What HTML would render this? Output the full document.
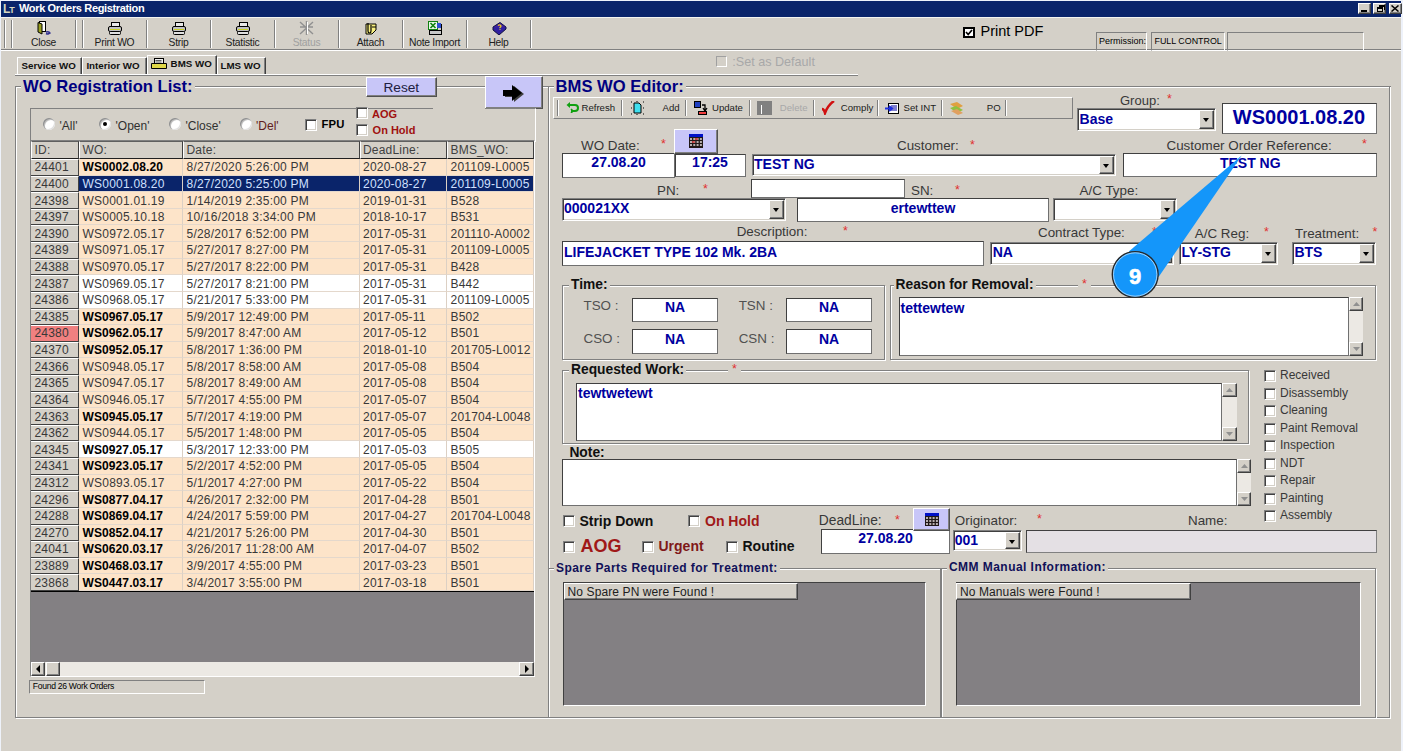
<!DOCTYPE html><html><head><meta charset="utf-8"><style>
*{box-sizing:border-box;margin:0;padding:0}
html,body{width:1403px;height:751px;overflow:hidden;background:#d4d0c8;font-family:"Liberation Sans",sans-serif;color:#000}
.a{position:absolute;white-space:nowrap}
.sunk{background:#fff;border:1px solid;border-color:#808080 #fff #fff #808080;box-shadow:inset 1px 1px 0 #404040,inset -1px -1px 0 #d4d0c8}
.flat{background:#fff;border:1px solid;border-color:#404040 #707070 #707070 #404040}
.raised{background:#d4d0c8;border:1px solid;border-color:#fff #404040 #404040 #fff;box-shadow:inset -1px -1px 0 #808080}
.grp{border:1px solid #808080;box-shadow:inset 1px 1px 0 #fff,1px 1px 0 #fff}
.vsep{width:2px;border-left:1px solid #808080;border-right:1px solid #fff}
.hsep{height:2px;border-top:1px solid #808080;border-bottom:1px solid #fff}
.dd{position:absolute;right:1px;top:1px;bottom:1px;width:15px;background:#d4d0c8;border:1px solid;border-color:#fff #404040 #404040 #fff;box-shadow:inset -1px -1px 0 #808080}
.dd:after{content:"";position:absolute;left:3px;top:50%;margin-top:-1px;border-left:3.5px solid transparent;border-right:3.5px solid transparent;border-top:4px solid #000}
.cb{position:absolute;width:12px;height:12px;background:#fff;border:1px solid;border-color:#808080 #fff #fff #808080;box-shadow:inset 1px 1px 0 #404040,inset -1px -1px 0 #d4d0c8}
.rb{position:absolute;width:12px;height:12px;border-radius:50%;background:#fff;box-shadow:inset 1px 1px 0 #909090,inset 2px 2px 0 #c0c0c0,inset -1px -1px 0 #e0e0e0}
.lav{background:#c8c6f8;border:1px solid;border-color:#fff #505050 #505050 #fff;box-shadow:inset -1px -1px 0 #808080}
</style></head><body>
<div class="a " style="left:0px;top:0px;width:1403px;height:1px;background:#eef2fa"></div>
<div class="a " style="left:0px;top:0px;width:1px;height:751px;background:#eef2fa"></div>
<div class="a " style="left:1401px;top:0px;width:2px;height:751px;background:#eef2fa"></div>
<div class="a " style="left:1px;top:1px;width:1400px;height:16px;background:#0a246a"></div>
<div class="a " style="left:19px;top:3.15px;font-size:11px;line-height:11px;font-weight:bold;color:#fff;letter-spacing:-0.35px">Work Orders Registration</div>
<div class="a " style="left:3px;top:2.80px;font-size:12px;line-height:12px;font-weight:bold;color:#d8d8c0;letter-spacing:-1px;font-family:"Liberation Serif"">L<span style="font-size:9px">T</span></div>
<div class="a raised" style="left:1358px;top:3px;width:13px;height:11px;"></div>
<div class="a raised" style="left:1373px;top:3px;width:13px;height:11px;"></div>
<div class="a raised" style="left:1389px;top:3px;width:13px;height:11px;"></div>
<div class="a " style="left:1361px;top:10px;width:6px;height:2px;background:#000"></div>
<div class="a " style="left:1377px;top:7px;width:6px;height:5px;border:1px solid #000;border-top-width:2px;background:#d4d0c8"></div>
<div class="a " style="left:1379px;top:5px;width:6px;height:5px;border:1px solid #000;border-top-width:2px;border-left:none;border-bottom:none"></div>
<svg class="a" style="left:1391px;top:5px" width="8" height="7" viewBox="0 0 8 7"><path d="M0.5 0.5 L7.5 6.5 M7.5 0.5 L0.5 6.5" stroke="#000" stroke-width="1.5"/></svg>
<div class="a " style="left:1px;top:17px;width:1400px;height:1px;background:#f4f4f0"></div>
<div class="a vsep" style="left:4px;top:20px;width:2px;height:28px;"></div>
<div class="a vsep" style="left:11px;top:20px;width:2px;height:28px;"></div>
<div class="a vsep" style="left:75px;top:20px;width:2px;height:28px;"></div>
<div class="a vsep" style="left:82px;top:20px;width:2px;height:28px;"></div>
<div class="a vsep" style="left:146px;top:20px;width:2px;height:28px;"></div>
<div class="a vsep" style="left:210px;top:20px;width:2px;height:28px;"></div>
<div class="a vsep" style="left:274px;top:20px;width:2px;height:28px;"></div>
<div class="a vsep" style="left:338px;top:20px;width:2px;height:28px;"></div>
<div class="a vsep" style="left:402px;top:20px;width:2px;height:28px;"></div>
<div class="a vsep" style="left:466px;top:20px;width:2px;height:28px;"></div>
<div class="a vsep" style="left:530px;top:20px;width:2px;height:28px;"></div>
<div class="a" style="left:-106.5px;width:300px;text-align:center;top:37.74px;font-size:10.3px;line-height:10.3px;color:#202020;letter-spacing:-0.25px">Close</div>
<div class="a" style="left:-35.5px;width:300px;text-align:center;top:37.74px;font-size:10.3px;line-height:10.3px;color:#202020;letter-spacing:-0.25px">Print WO</div>
<div class="a" style="left:28.5px;width:300px;text-align:center;top:37.74px;font-size:10.3px;line-height:10.3px;color:#202020;letter-spacing:-0.25px">Strip</div>
<div class="a" style="left:92.5px;width:300px;text-align:center;top:37.74px;font-size:10.3px;line-height:10.3px;color:#202020;letter-spacing:-0.25px">Statistic</div>
<div class="a" style="left:156.5px;width:300px;text-align:center;top:37.74px;font-size:10.3px;line-height:10.3px;color:#a0a0a0;letter-spacing:-0.25px">Status</div>
<div class="a" style="left:220.5px;width:300px;text-align:center;top:37.74px;font-size:10.3px;line-height:10.3px;color:#202020;letter-spacing:-0.25px">Attach</div>
<div class="a" style="left:284.5px;width:300px;text-align:center;top:37.74px;font-size:10.3px;line-height:10.3px;color:#202020;letter-spacing:-0.25px">Note Import</div>
<div class="a" style="left:348.5px;width:300px;text-align:center;top:37.74px;font-size:10.3px;line-height:10.3px;color:#202020;letter-spacing:-0.25px">Help</div>
<div class="a hsep" style="left:1px;top:49px;width:1400px;height:2px;"></div>
<svg class="a" style="left:37px;top:21px" width="14" height="14" viewBox="0 0 14 14"><rect x="2.5" y="0.5" width="6" height="10" fill="#fff" stroke="#000"/><path d="M1 1.5 L5 3 L5 13 L1 11 Z" fill="#9aa020" stroke="#000" stroke-width="1"/><path d="M9 11 q3 -1 4 1 l-2 1 M9 12.5 q2 1 3 0" stroke="#303090" stroke-width="1.5" fill="none"/></svg>
<svg class="a" style="left:108px;top:22px" width="14" height="13" viewBox="0 0 14 13"><rect x="3.5" y="0.5" width="8" height="4" fill="#e8e8e8" stroke="#000"/><rect x="0.5" y="4.5" width="13" height="5" rx="1.5" fill="#c0c0c0" stroke="#000"/><rect x="2" y="7" width="10" height="1" fill="#c8d020"/><rect x="1.5" y="9.5" width="11" height="3" rx="1" fill="#e0e0e0" stroke="#000"/></svg>
<svg class="a" style="left:172px;top:22px" width="14" height="13" viewBox="0 0 14 13"><rect x="3.5" y="0.5" width="8" height="4" fill="#e8e8e8" stroke="#000"/><rect x="0.5" y="4.5" width="13" height="5" rx="1.5" fill="#c0c0c0" stroke="#000"/><rect x="2" y="7" width="10" height="1" fill="#c8d020"/><rect x="1.5" y="9.5" width="11" height="3" rx="1" fill="#e0e0e0" stroke="#000"/></svg>
<svg class="a" style="left:236px;top:22px" width="14" height="13" viewBox="0 0 14 13"><rect x="3.5" y="0.5" width="8" height="4" fill="#e8e8e8" stroke="#000"/><rect x="0.5" y="4.5" width="13" height="5" rx="1.5" fill="#c0c0c0" stroke="#000"/><rect x="2" y="7" width="10" height="1" fill="#c8d020"/><rect x="1.5" y="9.5" width="11" height="3" rx="1" fill="#e0e0e0" stroke="#000"/></svg>
<svg class="a" style="left:299px;top:21px" width="15" height="14" viewBox="0 0 15 14"><path d="M7.5 0 V14 M1 1 L14 13 M14 1 L1 13 M1 6 H14" stroke="#909090" stroke-width="1.4"/><path d="M8.5 1 V13" stroke="#fff" stroke-width="1"/></svg>
<svg class="a" style="left:363px;top:21px" width="15" height="14" viewBox="0 0 15 14"><path d="M3 3 H13 V9 L9 13 H3 Z" fill="#f8f080" stroke="#000"/><path d="M5 2 V10 Q5 12 6.5 12 Q8 12 8 10 V4" fill="none" stroke="#000" stroke-width="1.2"/><path d="M9 6 H13" stroke="#000"/></svg>
<svg class="a" style="left:428px;top:21px" width="14" height="14" viewBox="0 0 14 14"><rect x="0.5" y="0.5" width="9" height="8" fill="#e8f8e8" stroke="#108010"/><path d="M2.5 2 L7.5 7 M7.5 2 L2.5 7" stroke="#108010" stroke-width="1.6"/><rect x="9" y="2" width="4" height="5" fill="#3050d0"/><rect x="1.5" y="9.5" width="12" height="4" fill="#c8c8c8" stroke="#000"/><path d="M13.5 3 V13.5" stroke="#000"/></svg>
<svg class="a" style="left:492px;top:22px" width="15" height="13" viewBox="0 0 15 13"><path d="M1 5 L8 0.5 L14 5 L7 11 Z" fill="#4020a0" stroke="#101040"/><path d="M1 5 L1 8 L7 13 L14 7 L14 5" fill="#3020a0" stroke="#101040"/><path d="M6 3.5 q2 -1.5 3 0.5 q0 1 -1.5 2 M8 7 v0.8" stroke="#f0d020" stroke-width="1.3" fill="none"/></svg>
<svg class="a" style="left:963px;top:26.5px" width="12" height="11" viewBox="0 0 12 11"><rect x="1" y="1" width="10" height="9" fill="#fff" stroke="#000" stroke-width="2"/><path d="M3 5 L5.2 7.5 L9 3" stroke="#000" stroke-width="1.7" fill="none"/></svg>
<div class="a " style="left:980.5px;top:24.28px;font-size:14.5px;line-height:14.5px;color:#000">Print PDF</div>
<div class="a " style="left:1096px;top:31.5px;width:51px;height:19px;border:1px solid;border-color:#808080 #fff #fff #808080"></div>
<div class="a " style="left:1151px;top:31.5px;width:74px;height:19px;border:1px solid;border-color:#808080 #fff #fff #808080"></div>
<div class="a " style="left:1227px;top:31.5px;width:137px;height:19px;border:1px solid;border-color:#808080 #fff #fff #808080"></div>
<div class="a " style="left:1099px;top:36.85px;font-size:9px;line-height:9px;color:#000">Permission:</div>
<div class="a " style="left:1154.5px;top:36.94px;font-size:8.9px;line-height:8.9px;color:#000">FULL CONTROL</div>
<div class="a " style="left:17px;top:57px;width:64.5px;height:18px;border:1px solid;border-color:#fff #404040 transparent #fff;box-shadow:inset -1px 0 0 #808080"></div>
<div class="a " style="left:81.5px;top:57px;width:65.0px;height:18px;border:1px solid;border-color:#fff #404040 transparent #fff;box-shadow:inset -1px 0 0 #808080"></div>
<div class="a " style="left:216.5px;top:57px;width:49.5px;height:18px;border:1px solid;border-color:#fff #404040 transparent #fff;box-shadow:inset -1px 0 0 #808080"></div>
<div class="a " style="left:146.5px;top:54.5px;width:70px;height:21px;background:#d4d0c8;border:1px solid;border-color:#fff #404040 transparent #fff;box-shadow:inset -1px 0 0 #808080"></div>
<div class="a " style="left:21.6px;top:60.71px;font-size:9.75px;line-height:9.75px;font-weight:bold;color:#101010">Service WO</div>
<div class="a " style="left:86.4px;top:60.71px;font-size:9.75px;line-height:9.75px;font-weight:bold;color:#101010">Interior WO</div>
<div class="a " style="left:170.6px;top:58.71px;font-size:9.75px;line-height:9.75px;font-weight:bold;color:#101010">BMS WO</div>
<div class="a " style="left:220.5px;top:60.71px;font-size:9.75px;line-height:9.75px;font-weight:bold;color:#101010">LMS WO</div>
<svg class="a" style="left:151px;top:58px" width="16" height="11" viewBox="0 0 16 11"><rect x="3.5" y="0.5" width="9" height="6" fill="#f0f0f0" stroke="#000"/><path d="M4.5 2.5h6M4.5 4h6" stroke="#606060"/><path d="M0.5 5.5 H15.5 V10.5 H0.5 Z" fill="#e0d848" stroke="#000"/></svg>
<div class="a " style="left:716px;top:55.5px;width:11px;height:11px;border:1px solid;border-color:#a0a0a0 #fff #fff #a0a0a0"></div>
<div class="a " style="left:732.3px;top:55.99px;font-size:12.6px;line-height:12.6px;color:#a8a8a8">:Set as Default</div>
<div class="a " style="left:15px;top:73.5px;width:843px;height:2px;border-top:1px solid #fff;border-bottom:1px solid #808080"></div>
<div class="a grp" style="left:15px;top:86px;width:534px;height:631.5px;"></div>
<div class="a " style="left:21px;top:78.69px;font-size:16.6px;line-height:16.6px;font-weight:bold;color:#000080"><span style="padding:0 2px;background:#d4d0c8">WO Registration List:</span></div>
<div class="a lav" style="left:366px;top:77px;width:71px;height:20px;"></div>
<div class="a" style="left:251.3px;width:300px;text-align:center;top:81.06px;font-size:13.7px;line-height:13.7px;color:#202040">Reset</div>
<div class="a lav" style="left:485px;top:76px;width:57.5px;height:32.5px;"></div>
<svg class="a" style="left:501px;top:84px" width="24" height="19" viewBox="0 0 24 19"><path d="M4 7h9V2l10 8-10 8v-5H4z" fill="#404040"/><path d="M2 6h9V1l10 8-10 8v-5H2z" fill="#000"/></svg>
<div class="a " style="left:29.5px;top:107.5px;width:506px;height:34px;border:1px solid;border-color:#808080 #fff #fff #808080"></div>
<div class="a " style="left:433px;top:107px;width:52px;height:2px;background:#d4d0c8"></div>
<div class="rb" style="left:43px;top:118px"></div>
<div class="a " style="left:59.5px;top:120.00px;font-size:12px;line-height:12px;color:#303030">'All'</div>
<div class="rb" style="left:99px;top:118px"></div>
<div class="a " style="left:103px;top:122px;width:4px;height:4px;background:#000;border-radius:50%"></div>
<div class="a " style="left:115.5px;top:120.00px;font-size:12px;line-height:12px;color:#303030">'Open'</div>
<div class="rb" style="left:169px;top:118px"></div>
<div class="a " style="left:185.5px;top:120.00px;font-size:12px;line-height:12px;color:#303030">'Close'</div>
<div class="rb" style="left:239.5px;top:118px"></div>
<div class="a " style="left:256.0px;top:120.00px;font-size:12px;line-height:12px;color:#602020">'Del'</div>
<div class="cb" style="left:305px;top:119px"></div>
<div class="a " style="left:321.4px;top:119.39px;font-size:11.3px;line-height:11.3px;font-weight:bold;letter-spacing:0.2px">FPU</div>
<div class="cb" style="left:356px;top:107px"></div>
<div class="cb" style="left:356px;top:124px"></div>
<div class="a " style="left:372px;top:108.65px;font-size:11px;line-height:11px;font-weight:bold;color:#a01010">AOG</div>
<div class="a " style="left:372.6px;top:124.65px;font-size:11px;line-height:11px;font-weight:bold;color:#a01010">On Hold</div>
<div class="a " style="left:29.5px;top:140px;width:505.5px;height:537px;border:1px solid;border-color:#808080 #fff #fff #808080;background:#838083"></div>
<div class="a " style="left:31px;top:141px;width:48px;height:18px;background:#d4d0c8;border:1px solid;border-color:#606060 #404040 #202020 #fff"></div>
<div class="a " style="left:34.5px;top:143.80px;font-size:12px;line-height:12px;color:#404040;letter-spacing:0.2px">ID:</div>
<div class="a " style="left:79px;top:141px;width:104px;height:18px;background:#d4d0c8;border:1px solid;border-color:#606060 #404040 #202020 #fff"></div>
<div class="a " style="left:82.5px;top:143.80px;font-size:12px;line-height:12px;color:#404040;letter-spacing:0.2px">WO:</div>
<div class="a " style="left:183px;top:141px;width:176.5px;height:18px;background:#d4d0c8;border:1px solid;border-color:#606060 #404040 #202020 #fff"></div>
<div class="a " style="left:186.5px;top:143.80px;font-size:12px;line-height:12px;color:#404040;letter-spacing:0.2px">Date:</div>
<div class="a " style="left:359.5px;top:141px;width:87.5px;height:18px;background:#d4d0c8;border:1px solid;border-color:#606060 #404040 #202020 #fff"></div>
<div class="a " style="left:363.0px;top:143.80px;font-size:12px;line-height:12px;color:#404040;letter-spacing:0.2px">DeadLine:</div>
<div class="a " style="left:447px;top:141px;width:86.5px;height:18px;background:#d4d0c8;border:1px solid;border-color:#606060 #404040 #202020 #fff"></div>
<div class="a " style="left:450.5px;top:143.80px;font-size:12px;line-height:12px;color:#404040;letter-spacing:0.2px">BMS_WO:</div>
<div class="a " style="left:31px;top:159.0px;width:48px;height:16.615384615384617px;background:#d4d0c8;border-top:1px solid #fff;border-bottom:1px solid #404040;border-right:1px solid #404040"></div>
<div class="a " style="left:34.5px;top:161.30px;font-size:12px;line-height:12px;color:#383838;letter-spacing:0.2px">24401</div>
<div class="a " style="left:79px;top:159.0px;width:104px;height:16.615384615384617px;background:#fde4c9;border-right:1px solid #dcd0c4;border-bottom:1px solid #e4d8cc;overflow:hidden"></div>
<div class="a " style="left:82.5px;top:161.30px;font-size:12px;line-height:12px;color:#000;font-weight:bold;letter-spacing:0.1px">WS0002.08.20</div>
<div class="a " style="left:183px;top:159.0px;width:176.5px;height:16.615384615384617px;background:#fde4c9;border-right:1px solid #dcd0c4;border-bottom:1px solid #e4d8cc;overflow:hidden"></div>
<div class="a " style="left:186.5px;top:161.30px;font-size:12px;line-height:12px;color:#383838;letter-spacing:0.22px">8/27/2020 5:26:00 PM</div>
<div class="a " style="left:359.5px;top:159.0px;width:87.5px;height:16.615384615384617px;background:#fde4c9;border-right:1px solid #dcd0c4;border-bottom:1px solid #e4d8cc;overflow:hidden"></div>
<div class="a " style="left:363.0px;top:161.30px;font-size:12px;line-height:12px;color:#383838;letter-spacing:0.22px">2020-08-27</div>
<div class="a " style="left:447px;top:159.0px;width:86.5px;height:16.615384615384617px;background:#fde4c9;border-right:1px solid #dcd0c4;border-bottom:1px solid #e4d8cc;overflow:hidden"></div>
<div class="a " style="left:450.5px;top:161.30px;font-size:12px;line-height:12px;color:#383838;letter-spacing:0.22px">201109-L0005</div>
<div class="a " style="left:31px;top:175.6153846153846px;width:48px;height:16.615384615384617px;background:#d4d0c8;border-top:1px solid #fff;border-bottom:1px solid #404040;border-right:1px solid #404040"></div>
<div class="a " style="left:34.5px;top:177.92px;font-size:12px;line-height:12px;color:#383838;letter-spacing:0.2px">24400</div>
<div class="a " style="left:79px;top:175.6153846153846px;width:104px;height:16.615384615384617px;background:#0a246a;border-right:1px solid #dcd0c4;border-bottom:1px solid #e4d8cc;overflow:hidden"></div>
<div class="a " style="left:82.5px;top:177.92px;font-size:12px;line-height:12px;color:#d0e0ff;letter-spacing:0.22px">WS0001.08.20</div>
<div class="a " style="left:183px;top:175.6153846153846px;width:176.5px;height:16.615384615384617px;background:#0a246a;border-right:1px solid #dcd0c4;border-bottom:1px solid #e4d8cc;overflow:hidden"></div>
<div class="a " style="left:186.5px;top:177.92px;font-size:12px;line-height:12px;color:#d0e0ff;letter-spacing:0.22px">8/27/2020 5:25:00 PM</div>
<div class="a " style="left:359.5px;top:175.6153846153846px;width:87.5px;height:16.615384615384617px;background:#0a246a;border-right:1px solid #dcd0c4;border-bottom:1px solid #e4d8cc;overflow:hidden"></div>
<div class="a " style="left:363.0px;top:177.92px;font-size:12px;line-height:12px;color:#d0e0ff;letter-spacing:0.22px">2020-08-27</div>
<div class="a " style="left:447px;top:175.6153846153846px;width:86.5px;height:16.615384615384617px;background:#0a246a;border-right:1px solid #dcd0c4;border-bottom:1px solid #e4d8cc;overflow:hidden"></div>
<div class="a " style="left:450.5px;top:177.92px;font-size:12px;line-height:12px;color:#d0e0ff;letter-spacing:0.22px">201109-L0005</div>
<div class="a " style="left:31px;top:192.23076923076923px;width:48px;height:16.615384615384617px;background:#d4d0c8;border-top:1px solid #fff;border-bottom:1px solid #404040;border-right:1px solid #404040"></div>
<div class="a " style="left:34.5px;top:194.53px;font-size:12px;line-height:12px;color:#383838;letter-spacing:0.2px">24398</div>
<div class="a " style="left:79px;top:192.23076923076923px;width:104px;height:16.615384615384617px;background:#fde4c9;border-right:1px solid #dcd0c4;border-bottom:1px solid #e4d8cc;overflow:hidden"></div>
<div class="a " style="left:82.5px;top:194.53px;font-size:12px;line-height:12px;color:#383838;letter-spacing:0.22px">WS0001.01.19</div>
<div class="a " style="left:183px;top:192.23076923076923px;width:176.5px;height:16.615384615384617px;background:#fde4c9;border-right:1px solid #dcd0c4;border-bottom:1px solid #e4d8cc;overflow:hidden"></div>
<div class="a " style="left:186.5px;top:194.53px;font-size:12px;line-height:12px;color:#383838;letter-spacing:0.22px">1/14/2019 2:35:00 PM</div>
<div class="a " style="left:359.5px;top:192.23076923076923px;width:87.5px;height:16.615384615384617px;background:#fde4c9;border-right:1px solid #dcd0c4;border-bottom:1px solid #e4d8cc;overflow:hidden"></div>
<div class="a " style="left:363.0px;top:194.53px;font-size:12px;line-height:12px;color:#383838;letter-spacing:0.22px">2019-01-31</div>
<div class="a " style="left:447px;top:192.23076923076923px;width:86.5px;height:16.615384615384617px;background:#fde4c9;border-right:1px solid #dcd0c4;border-bottom:1px solid #e4d8cc;overflow:hidden"></div>
<div class="a " style="left:450.5px;top:194.53px;font-size:12px;line-height:12px;color:#383838;letter-spacing:0.22px">B528</div>
<div class="a " style="left:31px;top:208.84615384615387px;width:48px;height:16.615384615384617px;background:#d4d0c8;border-top:1px solid #fff;border-bottom:1px solid #404040;border-right:1px solid #404040"></div>
<div class="a " style="left:34.5px;top:211.15px;font-size:12px;line-height:12px;color:#383838;letter-spacing:0.2px">24397</div>
<div class="a " style="left:79px;top:208.84615384615387px;width:104px;height:16.615384615384617px;background:#fde4c9;border-right:1px solid #dcd0c4;border-bottom:1px solid #e4d8cc;overflow:hidden"></div>
<div class="a " style="left:82.5px;top:211.15px;font-size:12px;line-height:12px;color:#383838;letter-spacing:0.22px">WS0005.10.18</div>
<div class="a " style="left:183px;top:208.84615384615387px;width:176.5px;height:16.615384615384617px;background:#fde4c9;border-right:1px solid #dcd0c4;border-bottom:1px solid #e4d8cc;overflow:hidden"></div>
<div class="a " style="left:186.5px;top:211.15px;font-size:12px;line-height:12px;color:#383838;letter-spacing:0.22px">10/16/2018 3:34:00 PM</div>
<div class="a " style="left:359.5px;top:208.84615384615387px;width:87.5px;height:16.615384615384617px;background:#fde4c9;border-right:1px solid #dcd0c4;border-bottom:1px solid #e4d8cc;overflow:hidden"></div>
<div class="a " style="left:363.0px;top:211.15px;font-size:12px;line-height:12px;color:#383838;letter-spacing:0.22px">2018-10-17</div>
<div class="a " style="left:447px;top:208.84615384615387px;width:86.5px;height:16.615384615384617px;background:#fde4c9;border-right:1px solid #dcd0c4;border-bottom:1px solid #e4d8cc;overflow:hidden"></div>
<div class="a " style="left:450.5px;top:211.15px;font-size:12px;line-height:12px;color:#383838;letter-spacing:0.22px">B531</div>
<div class="a " style="left:31px;top:225.46153846153845px;width:48px;height:16.615384615384617px;background:#d4d0c8;border-top:1px solid #fff;border-bottom:1px solid #404040;border-right:1px solid #404040"></div>
<div class="a " style="left:34.5px;top:227.76px;font-size:12px;line-height:12px;color:#383838;letter-spacing:0.2px">24390</div>
<div class="a " style="left:79px;top:225.46153846153845px;width:104px;height:16.615384615384617px;background:#fde4c9;border-right:1px solid #dcd0c4;border-bottom:1px solid #e4d8cc;overflow:hidden"></div>
<div class="a " style="left:82.5px;top:227.76px;font-size:12px;line-height:12px;color:#383838;letter-spacing:0.22px">WS0972.05.17</div>
<div class="a " style="left:183px;top:225.46153846153845px;width:176.5px;height:16.615384615384617px;background:#fde4c9;border-right:1px solid #dcd0c4;border-bottom:1px solid #e4d8cc;overflow:hidden"></div>
<div class="a " style="left:186.5px;top:227.76px;font-size:12px;line-height:12px;color:#383838;letter-spacing:0.22px">5/28/2017 6:52:00 PM</div>
<div class="a " style="left:359.5px;top:225.46153846153845px;width:87.5px;height:16.615384615384617px;background:#fde4c9;border-right:1px solid #dcd0c4;border-bottom:1px solid #e4d8cc;overflow:hidden"></div>
<div class="a " style="left:363.0px;top:227.76px;font-size:12px;line-height:12px;color:#383838;letter-spacing:0.22px">2017-05-31</div>
<div class="a " style="left:447px;top:225.46153846153845px;width:86.5px;height:16.615384615384617px;background:#fde4c9;border-right:1px solid #dcd0c4;border-bottom:1px solid #e4d8cc;overflow:hidden"></div>
<div class="a " style="left:450.5px;top:227.76px;font-size:12px;line-height:12px;color:#383838;letter-spacing:0.22px">201110-A0002</div>
<div class="a " style="left:31px;top:242.0769230769231px;width:48px;height:16.615384615384617px;background:#d4d0c8;border-top:1px solid #fff;border-bottom:1px solid #404040;border-right:1px solid #404040"></div>
<div class="a " style="left:34.5px;top:244.38px;font-size:12px;line-height:12px;color:#383838;letter-spacing:0.2px">24389</div>
<div class="a " style="left:79px;top:242.0769230769231px;width:104px;height:16.615384615384617px;background:#fde4c9;border-right:1px solid #dcd0c4;border-bottom:1px solid #e4d8cc;overflow:hidden"></div>
<div class="a " style="left:82.5px;top:244.38px;font-size:12px;line-height:12px;color:#383838;letter-spacing:0.22px">WS0971.05.17</div>
<div class="a " style="left:183px;top:242.0769230769231px;width:176.5px;height:16.615384615384617px;background:#fde4c9;border-right:1px solid #dcd0c4;border-bottom:1px solid #e4d8cc;overflow:hidden"></div>
<div class="a " style="left:186.5px;top:244.38px;font-size:12px;line-height:12px;color:#383838;letter-spacing:0.22px">5/27/2017 8:27:00 PM</div>
<div class="a " style="left:359.5px;top:242.0769230769231px;width:87.5px;height:16.615384615384617px;background:#fde4c9;border-right:1px solid #dcd0c4;border-bottom:1px solid #e4d8cc;overflow:hidden"></div>
<div class="a " style="left:363.0px;top:244.38px;font-size:12px;line-height:12px;color:#383838;letter-spacing:0.22px">2017-05-31</div>
<div class="a " style="left:447px;top:242.0769230769231px;width:86.5px;height:16.615384615384617px;background:#fde4c9;border-right:1px solid #dcd0c4;border-bottom:1px solid #e4d8cc;overflow:hidden"></div>
<div class="a " style="left:450.5px;top:244.38px;font-size:12px;line-height:12px;color:#383838;letter-spacing:0.22px">201109-L0005</div>
<div class="a " style="left:31px;top:258.69230769230774px;width:48px;height:16.615384615384617px;background:#d4d0c8;border-top:1px solid #fff;border-bottom:1px solid #404040;border-right:1px solid #404040"></div>
<div class="a " style="left:34.5px;top:260.99px;font-size:12px;line-height:12px;color:#383838;letter-spacing:0.2px">24388</div>
<div class="a " style="left:79px;top:258.69230769230774px;width:104px;height:16.615384615384617px;background:#fde4c9;border-right:1px solid #dcd0c4;border-bottom:1px solid #e4d8cc;overflow:hidden"></div>
<div class="a " style="left:82.5px;top:260.99px;font-size:12px;line-height:12px;color:#383838;letter-spacing:0.22px">WS0970.05.17</div>
<div class="a " style="left:183px;top:258.69230769230774px;width:176.5px;height:16.615384615384617px;background:#fde4c9;border-right:1px solid #dcd0c4;border-bottom:1px solid #e4d8cc;overflow:hidden"></div>
<div class="a " style="left:186.5px;top:260.99px;font-size:12px;line-height:12px;color:#383838;letter-spacing:0.22px">5/27/2017 8:22:00 PM</div>
<div class="a " style="left:359.5px;top:258.69230769230774px;width:87.5px;height:16.615384615384617px;background:#fde4c9;border-right:1px solid #dcd0c4;border-bottom:1px solid #e4d8cc;overflow:hidden"></div>
<div class="a " style="left:363.0px;top:260.99px;font-size:12px;line-height:12px;color:#383838;letter-spacing:0.22px">2017-05-31</div>
<div class="a " style="left:447px;top:258.69230769230774px;width:86.5px;height:16.615384615384617px;background:#fde4c9;border-right:1px solid #dcd0c4;border-bottom:1px solid #e4d8cc;overflow:hidden"></div>
<div class="a " style="left:450.5px;top:260.99px;font-size:12px;line-height:12px;color:#383838;letter-spacing:0.22px">B428</div>
<div class="a " style="left:31px;top:275.3076923076923px;width:48px;height:16.615384615384617px;background:#d4d0c8;border-top:1px solid #fff;border-bottom:1px solid #404040;border-right:1px solid #404040"></div>
<div class="a " style="left:34.5px;top:277.61px;font-size:12px;line-height:12px;color:#383838;letter-spacing:0.2px">24387</div>
<div class="a " style="left:79px;top:275.3076923076923px;width:104px;height:16.615384615384617px;background:#ffffff;border-right:1px solid #dcd0c4;border-bottom:1px solid #e4d8cc;overflow:hidden"></div>
<div class="a " style="left:82.5px;top:277.61px;font-size:12px;line-height:12px;color:#383838;letter-spacing:0.22px">WS0969.05.17</div>
<div class="a " style="left:183px;top:275.3076923076923px;width:176.5px;height:16.615384615384617px;background:#ffffff;border-right:1px solid #dcd0c4;border-bottom:1px solid #e4d8cc;overflow:hidden"></div>
<div class="a " style="left:186.5px;top:277.61px;font-size:12px;line-height:12px;color:#383838;letter-spacing:0.22px">5/27/2017 8:21:00 PM</div>
<div class="a " style="left:359.5px;top:275.3076923076923px;width:87.5px;height:16.615384615384617px;background:#ffffff;border-right:1px solid #dcd0c4;border-bottom:1px solid #e4d8cc;overflow:hidden"></div>
<div class="a " style="left:363.0px;top:277.61px;font-size:12px;line-height:12px;color:#383838;letter-spacing:0.22px">2017-05-31</div>
<div class="a " style="left:447px;top:275.3076923076923px;width:86.5px;height:16.615384615384617px;background:#ffffff;border-right:1px solid #dcd0c4;border-bottom:1px solid #e4d8cc;overflow:hidden"></div>
<div class="a " style="left:450.5px;top:277.61px;font-size:12px;line-height:12px;color:#383838;letter-spacing:0.22px">B442</div>
<div class="a " style="left:31px;top:291.9230769230769px;width:48px;height:16.615384615384617px;background:#d4d0c8;border-top:1px solid #fff;border-bottom:1px solid #404040;border-right:1px solid #404040"></div>
<div class="a " style="left:34.5px;top:294.22px;font-size:12px;line-height:12px;color:#383838;letter-spacing:0.2px">24386</div>
<div class="a " style="left:79px;top:291.9230769230769px;width:104px;height:16.615384615384617px;background:#ffffff;border-right:1px solid #dcd0c4;border-bottom:1px solid #e4d8cc;overflow:hidden"></div>
<div class="a " style="left:82.5px;top:294.22px;font-size:12px;line-height:12px;color:#383838;letter-spacing:0.22px">WS0968.05.17</div>
<div class="a " style="left:183px;top:291.9230769230769px;width:176.5px;height:16.615384615384617px;background:#ffffff;border-right:1px solid #dcd0c4;border-bottom:1px solid #e4d8cc;overflow:hidden"></div>
<div class="a " style="left:186.5px;top:294.22px;font-size:12px;line-height:12px;color:#383838;letter-spacing:0.22px">5/21/2017 5:33:00 PM</div>
<div class="a " style="left:359.5px;top:291.9230769230769px;width:87.5px;height:16.615384615384617px;background:#ffffff;border-right:1px solid #dcd0c4;border-bottom:1px solid #e4d8cc;overflow:hidden"></div>
<div class="a " style="left:363.0px;top:294.22px;font-size:12px;line-height:12px;color:#383838;letter-spacing:0.22px">2017-05-31</div>
<div class="a " style="left:447px;top:291.9230769230769px;width:86.5px;height:16.615384615384617px;background:#ffffff;border-right:1px solid #dcd0c4;border-bottom:1px solid #e4d8cc;overflow:hidden"></div>
<div class="a " style="left:450.5px;top:294.22px;font-size:12px;line-height:12px;color:#383838;letter-spacing:0.22px">201109-L0005</div>
<div class="a " style="left:31px;top:308.53846153846155px;width:48px;height:16.615384615384617px;background:#d4d0c8;border-top:1px solid #fff;border-bottom:1px solid #404040;border-right:1px solid #404040"></div>
<div class="a " style="left:34.5px;top:310.84px;font-size:12px;line-height:12px;color:#383838;letter-spacing:0.2px">24385</div>
<div class="a " style="left:79px;top:308.53846153846155px;width:104px;height:16.615384615384617px;background:#fde4c9;border-right:1px solid #dcd0c4;border-bottom:1px solid #e4d8cc;overflow:hidden"></div>
<div class="a " style="left:82.5px;top:310.84px;font-size:12px;line-height:12px;color:#000;font-weight:bold;letter-spacing:0.1px">WS0967.05.17</div>
<div class="a " style="left:183px;top:308.53846153846155px;width:176.5px;height:16.615384615384617px;background:#fde4c9;border-right:1px solid #dcd0c4;border-bottom:1px solid #e4d8cc;overflow:hidden"></div>
<div class="a " style="left:186.5px;top:310.84px;font-size:12px;line-height:12px;color:#383838;letter-spacing:0.22px">5/9/2017 12:49:00 PM</div>
<div class="a " style="left:359.5px;top:308.53846153846155px;width:87.5px;height:16.615384615384617px;background:#fde4c9;border-right:1px solid #dcd0c4;border-bottom:1px solid #e4d8cc;overflow:hidden"></div>
<div class="a " style="left:363.0px;top:310.84px;font-size:12px;line-height:12px;color:#383838;letter-spacing:0.22px">2017-05-11</div>
<div class="a " style="left:447px;top:308.53846153846155px;width:86.5px;height:16.615384615384617px;background:#fde4c9;border-right:1px solid #dcd0c4;border-bottom:1px solid #e4d8cc;overflow:hidden"></div>
<div class="a " style="left:450.5px;top:310.84px;font-size:12px;line-height:12px;color:#383838;letter-spacing:0.22px">B502</div>
<div class="a " style="left:31px;top:325.1538461538462px;width:48px;height:16.615384615384617px;background:#f08080;border-top:1px solid #fff;border-bottom:1px solid #404040;border-right:1px solid #404040"></div>
<div class="a " style="left:34.5px;top:327.45px;font-size:12px;line-height:12px;color:#383838;letter-spacing:0.2px">24380</div>
<div class="a " style="left:79px;top:325.1538461538462px;width:104px;height:16.615384615384617px;background:#fde4c9;border-right:1px solid #dcd0c4;border-bottom:1px solid #e4d8cc;overflow:hidden"></div>
<div class="a " style="left:82.5px;top:327.45px;font-size:12px;line-height:12px;color:#000;font-weight:bold;letter-spacing:0.1px">WS0962.05.17</div>
<div class="a " style="left:183px;top:325.1538461538462px;width:176.5px;height:16.615384615384617px;background:#fde4c9;border-right:1px solid #dcd0c4;border-bottom:1px solid #e4d8cc;overflow:hidden"></div>
<div class="a " style="left:186.5px;top:327.45px;font-size:12px;line-height:12px;color:#383838;letter-spacing:0.22px">5/9/2017 8:47:00 AM</div>
<div class="a " style="left:359.5px;top:325.1538461538462px;width:87.5px;height:16.615384615384617px;background:#fde4c9;border-right:1px solid #dcd0c4;border-bottom:1px solid #e4d8cc;overflow:hidden"></div>
<div class="a " style="left:363.0px;top:327.45px;font-size:12px;line-height:12px;color:#383838;letter-spacing:0.22px">2017-05-12</div>
<div class="a " style="left:447px;top:325.1538461538462px;width:86.5px;height:16.615384615384617px;background:#fde4c9;border-right:1px solid #dcd0c4;border-bottom:1px solid #e4d8cc;overflow:hidden"></div>
<div class="a " style="left:450.5px;top:327.45px;font-size:12px;line-height:12px;color:#383838;letter-spacing:0.22px">B501</div>
<div class="a " style="left:31px;top:341.7692307692308px;width:48px;height:16.615384615384617px;background:#d4d0c8;border-top:1px solid #fff;border-bottom:1px solid #404040;border-right:1px solid #404040"></div>
<div class="a " style="left:34.5px;top:344.07px;font-size:12px;line-height:12px;color:#383838;letter-spacing:0.2px">24370</div>
<div class="a " style="left:79px;top:341.7692307692308px;width:104px;height:16.615384615384617px;background:#fde4c9;border-right:1px solid #dcd0c4;border-bottom:1px solid #e4d8cc;overflow:hidden"></div>
<div class="a " style="left:82.5px;top:344.07px;font-size:12px;line-height:12px;color:#000;font-weight:bold;letter-spacing:0.1px">WS0952.05.17</div>
<div class="a " style="left:183px;top:341.7692307692308px;width:176.5px;height:16.615384615384617px;background:#fde4c9;border-right:1px solid #dcd0c4;border-bottom:1px solid #e4d8cc;overflow:hidden"></div>
<div class="a " style="left:186.5px;top:344.07px;font-size:12px;line-height:12px;color:#383838;letter-spacing:0.22px">5/8/2017 1:36:00 PM</div>
<div class="a " style="left:359.5px;top:341.7692307692308px;width:87.5px;height:16.615384615384617px;background:#fde4c9;border-right:1px solid #dcd0c4;border-bottom:1px solid #e4d8cc;overflow:hidden"></div>
<div class="a " style="left:363.0px;top:344.07px;font-size:12px;line-height:12px;color:#383838;letter-spacing:0.22px">2018-01-10</div>
<div class="a " style="left:447px;top:341.7692307692308px;width:86.5px;height:16.615384615384617px;background:#fde4c9;border-right:1px solid #dcd0c4;border-bottom:1px solid #e4d8cc;overflow:hidden"></div>
<div class="a " style="left:450.5px;top:344.07px;font-size:12px;line-height:12px;color:#383838;letter-spacing:0.22px">201705-L0012</div>
<div class="a " style="left:31px;top:358.3846153846154px;width:48px;height:16.615384615384617px;background:#d4d0c8;border-top:1px solid #fff;border-bottom:1px solid #404040;border-right:1px solid #404040"></div>
<div class="a " style="left:34.5px;top:360.68px;font-size:12px;line-height:12px;color:#383838;letter-spacing:0.2px">24366</div>
<div class="a " style="left:79px;top:358.3846153846154px;width:104px;height:16.615384615384617px;background:#fde4c9;border-right:1px solid #dcd0c4;border-bottom:1px solid #e4d8cc;overflow:hidden"></div>
<div class="a " style="left:82.5px;top:360.68px;font-size:12px;line-height:12px;color:#383838;letter-spacing:0.22px">WS0948.05.17</div>
<div class="a " style="left:183px;top:358.3846153846154px;width:176.5px;height:16.615384615384617px;background:#fde4c9;border-right:1px solid #dcd0c4;border-bottom:1px solid #e4d8cc;overflow:hidden"></div>
<div class="a " style="left:186.5px;top:360.68px;font-size:12px;line-height:12px;color:#383838;letter-spacing:0.22px">5/8/2017 8:58:00 AM</div>
<div class="a " style="left:359.5px;top:358.3846153846154px;width:87.5px;height:16.615384615384617px;background:#fde4c9;border-right:1px solid #dcd0c4;border-bottom:1px solid #e4d8cc;overflow:hidden"></div>
<div class="a " style="left:363.0px;top:360.68px;font-size:12px;line-height:12px;color:#383838;letter-spacing:0.22px">2017-05-08</div>
<div class="a " style="left:447px;top:358.3846153846154px;width:86.5px;height:16.615384615384617px;background:#fde4c9;border-right:1px solid #dcd0c4;border-bottom:1px solid #e4d8cc;overflow:hidden"></div>
<div class="a " style="left:450.5px;top:360.68px;font-size:12px;line-height:12px;color:#383838;letter-spacing:0.22px">B504</div>
<div class="a " style="left:31px;top:375.0px;width:48px;height:16.615384615384617px;background:#d4d0c8;border-top:1px solid #fff;border-bottom:1px solid #404040;border-right:1px solid #404040"></div>
<div class="a " style="left:34.5px;top:377.30px;font-size:12px;line-height:12px;color:#383838;letter-spacing:0.2px">24365</div>
<div class="a " style="left:79px;top:375.0px;width:104px;height:16.615384615384617px;background:#fde4c9;border-right:1px solid #dcd0c4;border-bottom:1px solid #e4d8cc;overflow:hidden"></div>
<div class="a " style="left:82.5px;top:377.30px;font-size:12px;line-height:12px;color:#383838;letter-spacing:0.22px">WS0947.05.17</div>
<div class="a " style="left:183px;top:375.0px;width:176.5px;height:16.615384615384617px;background:#fde4c9;border-right:1px solid #dcd0c4;border-bottom:1px solid #e4d8cc;overflow:hidden"></div>
<div class="a " style="left:186.5px;top:377.30px;font-size:12px;line-height:12px;color:#383838;letter-spacing:0.22px">5/8/2017 8:49:00 AM</div>
<div class="a " style="left:359.5px;top:375.0px;width:87.5px;height:16.615384615384617px;background:#fde4c9;border-right:1px solid #dcd0c4;border-bottom:1px solid #e4d8cc;overflow:hidden"></div>
<div class="a " style="left:363.0px;top:377.30px;font-size:12px;line-height:12px;color:#383838;letter-spacing:0.22px">2017-05-08</div>
<div class="a " style="left:447px;top:375.0px;width:86.5px;height:16.615384615384617px;background:#fde4c9;border-right:1px solid #dcd0c4;border-bottom:1px solid #e4d8cc;overflow:hidden"></div>
<div class="a " style="left:450.5px;top:377.30px;font-size:12px;line-height:12px;color:#383838;letter-spacing:0.22px">B504</div>
<div class="a " style="left:31px;top:391.61538461538464px;width:48px;height:16.615384615384617px;background:#d4d0c8;border-top:1px solid #fff;border-bottom:1px solid #404040;border-right:1px solid #404040"></div>
<div class="a " style="left:34.5px;top:393.92px;font-size:12px;line-height:12px;color:#383838;letter-spacing:0.2px">24364</div>
<div class="a " style="left:79px;top:391.61538461538464px;width:104px;height:16.615384615384617px;background:#fde4c9;border-right:1px solid #dcd0c4;border-bottom:1px solid #e4d8cc;overflow:hidden"></div>
<div class="a " style="left:82.5px;top:393.92px;font-size:12px;line-height:12px;color:#383838;letter-spacing:0.22px">WS0946.05.17</div>
<div class="a " style="left:183px;top:391.61538461538464px;width:176.5px;height:16.615384615384617px;background:#fde4c9;border-right:1px solid #dcd0c4;border-bottom:1px solid #e4d8cc;overflow:hidden"></div>
<div class="a " style="left:186.5px;top:393.92px;font-size:12px;line-height:12px;color:#383838;letter-spacing:0.22px">5/7/2017 4:55:00 PM</div>
<div class="a " style="left:359.5px;top:391.61538461538464px;width:87.5px;height:16.615384615384617px;background:#fde4c9;border-right:1px solid #dcd0c4;border-bottom:1px solid #e4d8cc;overflow:hidden"></div>
<div class="a " style="left:363.0px;top:393.92px;font-size:12px;line-height:12px;color:#383838;letter-spacing:0.22px">2017-05-07</div>
<div class="a " style="left:447px;top:391.61538461538464px;width:86.5px;height:16.615384615384617px;background:#fde4c9;border-right:1px solid #dcd0c4;border-bottom:1px solid #e4d8cc;overflow:hidden"></div>
<div class="a " style="left:450.5px;top:393.92px;font-size:12px;line-height:12px;color:#383838;letter-spacing:0.22px">B504</div>
<div class="a " style="left:31px;top:408.2307692307693px;width:48px;height:16.615384615384617px;background:#d4d0c8;border-top:1px solid #fff;border-bottom:1px solid #404040;border-right:1px solid #404040"></div>
<div class="a " style="left:34.5px;top:410.53px;font-size:12px;line-height:12px;color:#383838;letter-spacing:0.2px">24363</div>
<div class="a " style="left:79px;top:408.2307692307693px;width:104px;height:16.615384615384617px;background:#fde4c9;border-right:1px solid #dcd0c4;border-bottom:1px solid #e4d8cc;overflow:hidden"></div>
<div class="a " style="left:82.5px;top:410.53px;font-size:12px;line-height:12px;color:#000;font-weight:bold;letter-spacing:0.1px">WS0945.05.17</div>
<div class="a " style="left:183px;top:408.2307692307693px;width:176.5px;height:16.615384615384617px;background:#fde4c9;border-right:1px solid #dcd0c4;border-bottom:1px solid #e4d8cc;overflow:hidden"></div>
<div class="a " style="left:186.5px;top:410.53px;font-size:12px;line-height:12px;color:#383838;letter-spacing:0.22px">5/7/2017 4:19:00 PM</div>
<div class="a " style="left:359.5px;top:408.2307692307693px;width:87.5px;height:16.615384615384617px;background:#fde4c9;border-right:1px solid #dcd0c4;border-bottom:1px solid #e4d8cc;overflow:hidden"></div>
<div class="a " style="left:363.0px;top:410.53px;font-size:12px;line-height:12px;color:#383838;letter-spacing:0.22px">2017-05-07</div>
<div class="a " style="left:447px;top:408.2307692307693px;width:86.5px;height:16.615384615384617px;background:#fde4c9;border-right:1px solid #dcd0c4;border-bottom:1px solid #e4d8cc;overflow:hidden"></div>
<div class="a " style="left:450.5px;top:410.53px;font-size:12px;line-height:12px;color:#383838;letter-spacing:0.22px">201704-L0048</div>
<div class="a " style="left:31px;top:424.84615384615387px;width:48px;height:16.615384615384617px;background:#d4d0c8;border-top:1px solid #fff;border-bottom:1px solid #404040;border-right:1px solid #404040"></div>
<div class="a " style="left:34.5px;top:427.15px;font-size:12px;line-height:12px;color:#383838;letter-spacing:0.2px">24362</div>
<div class="a " style="left:79px;top:424.84615384615387px;width:104px;height:16.615384615384617px;background:#fde4c9;border-right:1px solid #dcd0c4;border-bottom:1px solid #e4d8cc;overflow:hidden"></div>
<div class="a " style="left:82.5px;top:427.15px;font-size:12px;line-height:12px;color:#383838;letter-spacing:0.22px">WS0944.05.17</div>
<div class="a " style="left:183px;top:424.84615384615387px;width:176.5px;height:16.615384615384617px;background:#fde4c9;border-right:1px solid #dcd0c4;border-bottom:1px solid #e4d8cc;overflow:hidden"></div>
<div class="a " style="left:186.5px;top:427.15px;font-size:12px;line-height:12px;color:#383838;letter-spacing:0.22px">5/5/2017 1:48:00 PM</div>
<div class="a " style="left:359.5px;top:424.84615384615387px;width:87.5px;height:16.615384615384617px;background:#fde4c9;border-right:1px solid #dcd0c4;border-bottom:1px solid #e4d8cc;overflow:hidden"></div>
<div class="a " style="left:363.0px;top:427.15px;font-size:12px;line-height:12px;color:#383838;letter-spacing:0.22px">2017-05-05</div>
<div class="a " style="left:447px;top:424.84615384615387px;width:86.5px;height:16.615384615384617px;background:#fde4c9;border-right:1px solid #dcd0c4;border-bottom:1px solid #e4d8cc;overflow:hidden"></div>
<div class="a " style="left:450.5px;top:427.15px;font-size:12px;line-height:12px;color:#383838;letter-spacing:0.22px">B504</div>
<div class="a " style="left:31px;top:441.4615384615385px;width:48px;height:16.615384615384617px;background:#d4d0c8;border-top:1px solid #fff;border-bottom:1px solid #404040;border-right:1px solid #404040"></div>
<div class="a " style="left:34.5px;top:443.76px;font-size:12px;line-height:12px;color:#383838;letter-spacing:0.2px">24345</div>
<div class="a " style="left:79px;top:441.4615384615385px;width:104px;height:16.615384615384617px;background:#ffffff;border-right:1px solid #dcd0c4;border-bottom:1px solid #e4d8cc;overflow:hidden"></div>
<div class="a " style="left:82.5px;top:443.76px;font-size:12px;line-height:12px;color:#000;font-weight:bold;letter-spacing:0.1px">WS0927.05.17</div>
<div class="a " style="left:183px;top:441.4615384615385px;width:176.5px;height:16.615384615384617px;background:#ffffff;border-right:1px solid #dcd0c4;border-bottom:1px solid #e4d8cc;overflow:hidden"></div>
<div class="a " style="left:186.5px;top:443.76px;font-size:12px;line-height:12px;color:#383838;letter-spacing:0.22px">5/3/2017 12:33:00 PM</div>
<div class="a " style="left:359.5px;top:441.4615384615385px;width:87.5px;height:16.615384615384617px;background:#ffffff;border-right:1px solid #dcd0c4;border-bottom:1px solid #e4d8cc;overflow:hidden"></div>
<div class="a " style="left:363.0px;top:443.76px;font-size:12px;line-height:12px;color:#383838;letter-spacing:0.22px">2017-05-03</div>
<div class="a " style="left:447px;top:441.4615384615385px;width:86.5px;height:16.615384615384617px;background:#ffffff;border-right:1px solid #dcd0c4;border-bottom:1px solid #e4d8cc;overflow:hidden"></div>
<div class="a " style="left:450.5px;top:443.76px;font-size:12px;line-height:12px;color:#383838;letter-spacing:0.22px">B505</div>
<div class="a " style="left:31px;top:458.0769230769231px;width:48px;height:16.615384615384617px;background:#d4d0c8;border-top:1px solid #fff;border-bottom:1px solid #404040;border-right:1px solid #404040"></div>
<div class="a " style="left:34.5px;top:460.38px;font-size:12px;line-height:12px;color:#383838;letter-spacing:0.2px">24341</div>
<div class="a " style="left:79px;top:458.0769230769231px;width:104px;height:16.615384615384617px;background:#fde4c9;border-right:1px solid #dcd0c4;border-bottom:1px solid #e4d8cc;overflow:hidden"></div>
<div class="a " style="left:82.5px;top:460.38px;font-size:12px;line-height:12px;color:#000;font-weight:bold;letter-spacing:0.1px">WS0923.05.17</div>
<div class="a " style="left:183px;top:458.0769230769231px;width:176.5px;height:16.615384615384617px;background:#fde4c9;border-right:1px solid #dcd0c4;border-bottom:1px solid #e4d8cc;overflow:hidden"></div>
<div class="a " style="left:186.5px;top:460.38px;font-size:12px;line-height:12px;color:#383838;letter-spacing:0.22px">5/2/2017 4:52:00 PM</div>
<div class="a " style="left:359.5px;top:458.0769230769231px;width:87.5px;height:16.615384615384617px;background:#fde4c9;border-right:1px solid #dcd0c4;border-bottom:1px solid #e4d8cc;overflow:hidden"></div>
<div class="a " style="left:363.0px;top:460.38px;font-size:12px;line-height:12px;color:#383838;letter-spacing:0.22px">2017-05-05</div>
<div class="a " style="left:447px;top:458.0769230769231px;width:86.5px;height:16.615384615384617px;background:#fde4c9;border-right:1px solid #dcd0c4;border-bottom:1px solid #e4d8cc;overflow:hidden"></div>
<div class="a " style="left:450.5px;top:460.38px;font-size:12px;line-height:12px;color:#383838;letter-spacing:0.22px">B504</div>
<div class="a " style="left:31px;top:474.69230769230774px;width:48px;height:16.615384615384617px;background:#d4d0c8;border-top:1px solid #fff;border-bottom:1px solid #404040;border-right:1px solid #404040"></div>
<div class="a " style="left:34.5px;top:476.99px;font-size:12px;line-height:12px;color:#383838;letter-spacing:0.2px">24312</div>
<div class="a " style="left:79px;top:474.69230769230774px;width:104px;height:16.615384615384617px;background:#fde4c9;border-right:1px solid #dcd0c4;border-bottom:1px solid #e4d8cc;overflow:hidden"></div>
<div class="a " style="left:82.5px;top:476.99px;font-size:12px;line-height:12px;color:#383838;letter-spacing:0.22px">WS0893.05.17</div>
<div class="a " style="left:183px;top:474.69230769230774px;width:176.5px;height:16.615384615384617px;background:#fde4c9;border-right:1px solid #dcd0c4;border-bottom:1px solid #e4d8cc;overflow:hidden"></div>
<div class="a " style="left:186.5px;top:476.99px;font-size:12px;line-height:12px;color:#383838;letter-spacing:0.22px">5/1/2017 4:27:00 PM</div>
<div class="a " style="left:359.5px;top:474.69230769230774px;width:87.5px;height:16.615384615384617px;background:#fde4c9;border-right:1px solid #dcd0c4;border-bottom:1px solid #e4d8cc;overflow:hidden"></div>
<div class="a " style="left:363.0px;top:476.99px;font-size:12px;line-height:12px;color:#383838;letter-spacing:0.22px">2017-05-22</div>
<div class="a " style="left:447px;top:474.69230769230774px;width:86.5px;height:16.615384615384617px;background:#fde4c9;border-right:1px solid #dcd0c4;border-bottom:1px solid #e4d8cc;overflow:hidden"></div>
<div class="a " style="left:450.5px;top:476.99px;font-size:12px;line-height:12px;color:#383838;letter-spacing:0.22px">B504</div>
<div class="a " style="left:31px;top:491.3076923076923px;width:48px;height:16.615384615384617px;background:#d4d0c8;border-top:1px solid #fff;border-bottom:1px solid #404040;border-right:1px solid #404040"></div>
<div class="a " style="left:34.5px;top:493.61px;font-size:12px;line-height:12px;color:#383838;letter-spacing:0.2px">24296</div>
<div class="a " style="left:79px;top:491.3076923076923px;width:104px;height:16.615384615384617px;background:#fde4c9;border-right:1px solid #dcd0c4;border-bottom:1px solid #e4d8cc;overflow:hidden"></div>
<div class="a " style="left:82.5px;top:493.61px;font-size:12px;line-height:12px;color:#000;font-weight:bold;letter-spacing:0.1px">WS0877.04.17</div>
<div class="a " style="left:183px;top:491.3076923076923px;width:176.5px;height:16.615384615384617px;background:#fde4c9;border-right:1px solid #dcd0c4;border-bottom:1px solid #e4d8cc;overflow:hidden"></div>
<div class="a " style="left:186.5px;top:493.61px;font-size:12px;line-height:12px;color:#383838;letter-spacing:0.22px">4/26/2017 2:32:00 PM</div>
<div class="a " style="left:359.5px;top:491.3076923076923px;width:87.5px;height:16.615384615384617px;background:#fde4c9;border-right:1px solid #dcd0c4;border-bottom:1px solid #e4d8cc;overflow:hidden"></div>
<div class="a " style="left:363.0px;top:493.61px;font-size:12px;line-height:12px;color:#383838;letter-spacing:0.22px">2017-04-28</div>
<div class="a " style="left:447px;top:491.3076923076923px;width:86.5px;height:16.615384615384617px;background:#fde4c9;border-right:1px solid #dcd0c4;border-bottom:1px solid #e4d8cc;overflow:hidden"></div>
<div class="a " style="left:450.5px;top:493.61px;font-size:12px;line-height:12px;color:#383838;letter-spacing:0.22px">B501</div>
<div class="a " style="left:31px;top:507.92307692307696px;width:48px;height:16.615384615384617px;background:#d4d0c8;border-top:1px solid #fff;border-bottom:1px solid #404040;border-right:1px solid #404040"></div>
<div class="a " style="left:34.5px;top:510.22px;font-size:12px;line-height:12px;color:#383838;letter-spacing:0.2px">24288</div>
<div class="a " style="left:79px;top:507.92307692307696px;width:104px;height:16.615384615384617px;background:#fde4c9;border-right:1px solid #dcd0c4;border-bottom:1px solid #e4d8cc;overflow:hidden"></div>
<div class="a " style="left:82.5px;top:510.22px;font-size:12px;line-height:12px;color:#000;font-weight:bold;letter-spacing:0.1px">WS0869.04.17</div>
<div class="a " style="left:183px;top:507.92307692307696px;width:176.5px;height:16.615384615384617px;background:#fde4c9;border-right:1px solid #dcd0c4;border-bottom:1px solid #e4d8cc;overflow:hidden"></div>
<div class="a " style="left:186.5px;top:510.22px;font-size:12px;line-height:12px;color:#383838;letter-spacing:0.22px">4/24/2017 5:59:00 PM</div>
<div class="a " style="left:359.5px;top:507.92307692307696px;width:87.5px;height:16.615384615384617px;background:#fde4c9;border-right:1px solid #dcd0c4;border-bottom:1px solid #e4d8cc;overflow:hidden"></div>
<div class="a " style="left:363.0px;top:510.22px;font-size:12px;line-height:12px;color:#383838;letter-spacing:0.22px">2017-04-27</div>
<div class="a " style="left:447px;top:507.92307692307696px;width:86.5px;height:16.615384615384617px;background:#fde4c9;border-right:1px solid #dcd0c4;border-bottom:1px solid #e4d8cc;overflow:hidden"></div>
<div class="a " style="left:450.5px;top:510.22px;font-size:12px;line-height:12px;color:#383838;letter-spacing:0.22px">201704-L0048</div>
<div class="a " style="left:31px;top:524.5384615384615px;width:48px;height:16.615384615384617px;background:#d4d0c8;border-top:1px solid #fff;border-bottom:1px solid #404040;border-right:1px solid #404040"></div>
<div class="a " style="left:34.5px;top:526.84px;font-size:12px;line-height:12px;color:#383838;letter-spacing:0.2px">24270</div>
<div class="a " style="left:79px;top:524.5384615384615px;width:104px;height:16.615384615384617px;background:#fde4c9;border-right:1px solid #dcd0c4;border-bottom:1px solid #e4d8cc;overflow:hidden"></div>
<div class="a " style="left:82.5px;top:526.84px;font-size:12px;line-height:12px;color:#000;font-weight:bold;letter-spacing:0.1px">WS0852.04.17</div>
<div class="a " style="left:183px;top:524.5384615384615px;width:176.5px;height:16.615384615384617px;background:#fde4c9;border-right:1px solid #dcd0c4;border-bottom:1px solid #e4d8cc;overflow:hidden"></div>
<div class="a " style="left:186.5px;top:526.84px;font-size:12px;line-height:12px;color:#383838;letter-spacing:0.22px">4/21/2017 5:26:00 PM</div>
<div class="a " style="left:359.5px;top:524.5384615384615px;width:87.5px;height:16.615384615384617px;background:#fde4c9;border-right:1px solid #dcd0c4;border-bottom:1px solid #e4d8cc;overflow:hidden"></div>
<div class="a " style="left:363.0px;top:526.84px;font-size:12px;line-height:12px;color:#383838;letter-spacing:0.22px">2017-04-30</div>
<div class="a " style="left:447px;top:524.5384615384615px;width:86.5px;height:16.615384615384617px;background:#fde4c9;border-right:1px solid #dcd0c4;border-bottom:1px solid #e4d8cc;overflow:hidden"></div>
<div class="a " style="left:450.5px;top:526.84px;font-size:12px;line-height:12px;color:#383838;letter-spacing:0.22px">B501</div>
<div class="a " style="left:31px;top:541.1538461538462px;width:48px;height:16.615384615384617px;background:#d4d0c8;border-top:1px solid #fff;border-bottom:1px solid #404040;border-right:1px solid #404040"></div>
<div class="a " style="left:34.5px;top:543.45px;font-size:12px;line-height:12px;color:#383838;letter-spacing:0.2px">24041</div>
<div class="a " style="left:79px;top:541.1538461538462px;width:104px;height:16.615384615384617px;background:#fde4c9;border-right:1px solid #dcd0c4;border-bottom:1px solid #e4d8cc;overflow:hidden"></div>
<div class="a " style="left:82.5px;top:543.45px;font-size:12px;line-height:12px;color:#000;font-weight:bold;letter-spacing:0.1px">WS0620.03.17</div>
<div class="a " style="left:183px;top:541.1538461538462px;width:176.5px;height:16.615384615384617px;background:#fde4c9;border-right:1px solid #dcd0c4;border-bottom:1px solid #e4d8cc;overflow:hidden"></div>
<div class="a " style="left:186.5px;top:543.45px;font-size:12px;line-height:12px;color:#383838;letter-spacing:0.22px">3/26/2017 11:28:00 AM</div>
<div class="a " style="left:359.5px;top:541.1538461538462px;width:87.5px;height:16.615384615384617px;background:#fde4c9;border-right:1px solid #dcd0c4;border-bottom:1px solid #e4d8cc;overflow:hidden"></div>
<div class="a " style="left:363.0px;top:543.45px;font-size:12px;line-height:12px;color:#383838;letter-spacing:0.22px">2017-04-07</div>
<div class="a " style="left:447px;top:541.1538461538462px;width:86.5px;height:16.615384615384617px;background:#fde4c9;border-right:1px solid #dcd0c4;border-bottom:1px solid #e4d8cc;overflow:hidden"></div>
<div class="a " style="left:450.5px;top:543.45px;font-size:12px;line-height:12px;color:#383838;letter-spacing:0.22px">B502</div>
<div class="a " style="left:31px;top:557.7692307692308px;width:48px;height:16.615384615384617px;background:#d4d0c8;border-top:1px solid #fff;border-bottom:1px solid #404040;border-right:1px solid #404040"></div>
<div class="a " style="left:34.5px;top:560.07px;font-size:12px;line-height:12px;color:#383838;letter-spacing:0.2px">23889</div>
<div class="a " style="left:79px;top:557.7692307692308px;width:104px;height:16.615384615384617px;background:#fde4c9;border-right:1px solid #dcd0c4;border-bottom:1px solid #e4d8cc;overflow:hidden"></div>
<div class="a " style="left:82.5px;top:560.07px;font-size:12px;line-height:12px;color:#000;font-weight:bold;letter-spacing:0.1px">WS0468.03.17</div>
<div class="a " style="left:183px;top:557.7692307692308px;width:176.5px;height:16.615384615384617px;background:#fde4c9;border-right:1px solid #dcd0c4;border-bottom:1px solid #e4d8cc;overflow:hidden"></div>
<div class="a " style="left:186.5px;top:560.07px;font-size:12px;line-height:12px;color:#383838;letter-spacing:0.22px">3/9/2017 4:55:00 PM</div>
<div class="a " style="left:359.5px;top:557.7692307692308px;width:87.5px;height:16.615384615384617px;background:#fde4c9;border-right:1px solid #dcd0c4;border-bottom:1px solid #e4d8cc;overflow:hidden"></div>
<div class="a " style="left:363.0px;top:560.07px;font-size:12px;line-height:12px;color:#383838;letter-spacing:0.22px">2017-03-23</div>
<div class="a " style="left:447px;top:557.7692307692308px;width:86.5px;height:16.615384615384617px;background:#fde4c9;border-right:1px solid #dcd0c4;border-bottom:1px solid #e4d8cc;overflow:hidden"></div>
<div class="a " style="left:450.5px;top:560.07px;font-size:12px;line-height:12px;color:#383838;letter-spacing:0.22px">B501</div>
<div class="a " style="left:31px;top:574.3846153846155px;width:48px;height:16.615384615384617px;background:#d4d0c8;border-top:1px solid #fff;border-bottom:1px solid #404040;border-right:1px solid #404040"></div>
<div class="a " style="left:34.5px;top:576.68px;font-size:12px;line-height:12px;color:#383838;letter-spacing:0.2px">23868</div>
<div class="a " style="left:79px;top:574.3846153846155px;width:104px;height:16.615384615384617px;background:#fde4c9;border-right:1px solid #dcd0c4;border-bottom:1px solid #e4d8cc;overflow:hidden"></div>
<div class="a " style="left:82.5px;top:576.68px;font-size:12px;line-height:12px;color:#000;font-weight:bold;letter-spacing:0.1px">WS0447.03.17</div>
<div class="a " style="left:183px;top:574.3846153846155px;width:176.5px;height:16.615384615384617px;background:#fde4c9;border-right:1px solid #dcd0c4;border-bottom:1px solid #e4d8cc;overflow:hidden"></div>
<div class="a " style="left:186.5px;top:576.68px;font-size:12px;line-height:12px;color:#383838;letter-spacing:0.22px">3/4/2017 3:55:00 PM</div>
<div class="a " style="left:359.5px;top:574.3846153846155px;width:87.5px;height:16.615384615384617px;background:#fde4c9;border-right:1px solid #dcd0c4;border-bottom:1px solid #e4d8cc;overflow:hidden"></div>
<div class="a " style="left:363.0px;top:576.68px;font-size:12px;line-height:12px;color:#383838;letter-spacing:0.22px">2017-03-18</div>
<div class="a " style="left:447px;top:574.3846153846155px;width:86.5px;height:16.615384615384617px;background:#fde4c9;border-right:1px solid #dcd0c4;border-bottom:1px solid #e4d8cc;overflow:hidden"></div>
<div class="a " style="left:450.5px;top:576.68px;font-size:12px;line-height:12px;color:#383838;letter-spacing:0.22px">B501</div>
<div class="a " style="left:31px;top:590.5px;width:503px;height:1px;background:#000"></div>
<div class="a " style="left:30.5px;top:662px;width:504px;height:14px;background:#ece9e4"></div>
<div class="a raised" style="left:31px;top:662px;width:14px;height:14px;"></div>
<svg class="a" style="left:35px;top:665px" width="6" height="8" viewBox="0 0 6 8"><path d="M5 0 V8 L1 4 Z" fill="#000"/></svg>
<div class="a raised" style="left:45.5px;top:662px;width:14px;height:14px;"></div>
<div class="a raised" style="left:519px;top:662px;width:15px;height:14px;"></div>
<svg class="a" style="left:524px;top:665px" width="6" height="8" viewBox="0 0 6 8"><path d="M1 0 V8 L5 4 Z" fill="#000"/></svg>
<div class="a " style="left:29.3px;top:680px;width:175.5px;height:13.5px;border:1px solid;border-color:#808080 #fff #fff #808080"></div>
<div class="a " style="left:32.8px;top:682.19px;font-size:8.6px;line-height:8.6px;color:#000;letter-spacing:-0.3px">Found 26 Work Orders</div>
<div class="a grp" style="left:548px;top:86px;width:842px;height:631.5px;"></div>
<div class="a " style="left:553.6px;top:78.69px;font-size:16.6px;line-height:16.6px;font-weight:bold;color:#000080"><span style="padding:0 2px;background:#d4d0c8">BMS WO Editor:</span></div>
<div class="a " style="left:553px;top:97.3px;width:520px;height:21.5px;border:1px solid;border-color:#fff #808080 #808080 #fff"></div>
<div class="a vsep" style="left:557px;top:100px;width:2px;height:15.5px;"></div>
<div class="a vsep" style="left:621px;top:100px;width:2px;height:15.5px;"></div>
<div class="a vsep" style="left:685px;top:100px;width:2px;height:15.5px;"></div>
<div class="a vsep" style="left:749px;top:100px;width:2px;height:15.5px;"></div>
<div class="a vsep" style="left:813px;top:100px;width:2px;height:15.5px;"></div>
<div class="a vsep" style="left:877px;top:100px;width:2px;height:15.5px;"></div>
<div class="a vsep" style="left:941px;top:100px;width:2px;height:15.5px;"></div>
<div class="a vsep" style="left:1005px;top:100px;width:2px;height:15.5px;"></div>
<div class="a " style="left:581.5px;top:103.34px;font-size:9.6px;line-height:9.6px;color:#202020">Refresh</div>
<div class="a " style="left:662.5px;top:103.34px;font-size:9.6px;line-height:9.6px;color:#202020">Add</div>
<div class="a " style="left:712px;top:103.34px;font-size:9.6px;line-height:9.6px;color:#202020">Update</div>
<div class="a " style="left:779.8px;top:103.34px;font-size:9.6px;line-height:9.6px;color:#a8a8a8">Delete</div>
<div class="a " style="left:840.8px;top:103.34px;font-size:9.6px;line-height:9.6px;color:#202020">Comply</div>
<div class="a " style="left:903.5px;top:103.34px;font-size:9.6px;line-height:9.6px;color:#202020">Set INT</div>
<div class="a " style="left:986.8px;top:103.34px;font-size:9.6px;line-height:9.6px;color:#202020">PO</div>
<svg class="a" style="left:566px;top:102px" width="13" height="11" viewBox="0 0 13 11"><path d="M3 3 H9 Q12 3 12 6 Q12 9 9 9 H5" stroke="#10a010" stroke-width="2" fill="none"/><path d="M0.5 3 L4 0 V6 Z" fill="#10a010"/><path d="M5 7 L7 9 L5 11" stroke="#10a010" stroke-width="1.5" fill="none"/></svg>
<svg class="a" style="left:630px;top:101px" width="14" height="14" viewBox="0 0 14 14"><path d="M4 2 H9 L11 4 V12 H4 Z" fill="#40e0f0" stroke="#000"/><path d="M1 1h1M1 7h1M1 13h1M13 1h1M13 7h1M13 13h1M7 0v1M7 13v1" stroke="#000"/></svg>
<svg class="a" style="left:694px;top:101px" width="14" height="14" viewBox="0 0 14 14"><rect x="0.5" y="0.5" width="6" height="6" fill="#2040c0" stroke="#000"/><path d="M8 4 H11 V9 M9 7 L11 10 L13 7" stroke="#000" stroke-width="1.3" fill="none"/><rect x="4.5" y="10.5" width="8" height="3" fill="#f04040" stroke="#000"/></svg>
<svg class="a" style="left:757px;top:101px" width="15" height="14" viewBox="0 0 15 14"><rect x="0" y="0" width="15" height="14" fill="#808080"/><path d="M4.5 4 V13" stroke="#fff"/></svg>
<svg class="a" style="left:821px;top:101px" width="14" height="14" viewBox="0 0 14 14"><path d="M1 8 Q3 8 4 12 Q7 4 13 0" stroke="#d01010" stroke-width="2.5" fill="none"/></svg>
<svg class="a" style="left:885px;top:103px" width="14" height="11" viewBox="0 0 14 11"><rect x="3.5" y="0.5" width="10" height="10" fill="#fff" stroke="#000"/><path d="M6 3h6M6 5h6M6 7h6" stroke="#0000a0"/><path d="M0 5.5 H6 M4 3 L7 5.5 L4 8" stroke="#2030e0" stroke-width="2" fill="none"/></svg>
<svg class="a" style="left:949px;top:101px" width="15" height="14" viewBox="0 0 15 14"><path d="M1 3 L8 1 L14 5 L8 8 Z" fill="#e0a040"/><path d="M1 7 L7 5 L14 9 L8 12 Z" fill="#90c040"/><path d="M2 10 L8 8 L14 12 L9 14 Z" fill="#e0a060"/></svg>
<div class="a " style="left:1120px;top:93.55px;font-size:13px;line-height:13px;color:#383838">Group:</div>
<div class="a " style="left:1167px;top:92.97px;font-size:12.5px;line-height:12.5px;color:#e03030">*</div>
<div class="a sunk" style="left:1077px;top:108px;width:139px;height:22.5px;"><div class="dd"></div></div>
<div class="a " style="left:1079.6px;top:112.00px;font-size:14px;line-height:14px;color:#0000a0;font-weight:bold">Base</div>
<div class="a flat" style="left:1221.5px;top:103px;width:155.5px;height:31px;"></div>
<div class="a " style="left:1232.8px;top:106.70px;font-size:20px;line-height:20px;color:#0000a0;font-weight:bold">WS0001.08.20</div>
<div class="a " style="left:1072px;top:86px;width:318.5px;height:1px;background:#808080"></div>
<div class="a " style="left:581px;top:138.81px;font-size:13.4px;line-height:13.4px;color:#383838">WO Date:</div>
<div class="a " style="left:661px;top:138.38px;font-size:12.5px;line-height:12.5px;color:#e03030">*</div>
<div class="a flat" style="left:562.3px;top:152.5px;width:112.5px;height:25px;"></div>
<div class="a flat" style="left:674.5px;top:154.2px;width:71px;height:23.1px;"></div>
<div class="a lav" style="left:674.1px;top:129px;width:43.6px;height:25.4px;"></div>
<svg class="a" style="left:689px;top:134px" width="14" height="14" viewBox="0 0 14 14"><rect x="0" y="0" width="14" height="14" fill="#201818"/><rect x="0" y="0" width="14" height="3" fill="#0010c8"/><path d="M1 5h12M1 8h12M1 11h12" stroke="#e8e0e0" stroke-width="1.4" stroke-dasharray="2 1.3"/><path d="M6 5h3M3 8h3" stroke="#e04040" stroke-width="1.4"/></svg>
<div class="a" style="left:468.6px;width:300px;text-align:center;top:155.10px;font-size:14px;line-height:14px;color:#0000a0;font-weight:bold">27.08.20</div>
<div class="a" style="left:560px;width:300px;text-align:center;top:155.10px;font-size:14px;line-height:14px;color:#0000a0;font-weight:bold">17:25</div>
<div class="a " style="left:897px;top:139.21px;font-size:13.4px;line-height:13.4px;color:#383838">Customer:</div>
<div class="a " style="left:970px;top:139.38px;font-size:12.5px;line-height:12.5px;color:#e03030">*</div>
<div class="a sunk" style="left:752px;top:153.5px;width:364px;height:22px;"><div class="dd"></div></div>
<div class="a " style="left:754px;top:156.60px;font-size:14px;line-height:14px;color:#0000a0;font-weight:bold">TEST NG</div>
<div class="a " style="left:1166.5px;top:139.21px;font-size:13.4px;line-height:13.4px;color:#383838">Customer Order Reference:</div>
<div class="a " style="left:1362px;top:138.38px;font-size:12.5px;line-height:12.5px;color:#e03030">*</div>
<div class="a flat" style="left:1123px;top:152.8px;width:254px;height:24.7px;"></div>
<div class="a" style="left:1100.3px;width:300px;text-align:center;top:155.50px;font-size:14px;line-height:14px;color:#0000a0;font-weight:bold">TEST NG</div>
<div class="a " style="left:657px;top:183.61px;font-size:13.4px;line-height:13.4px;color:#383838">PN:</div>
<div class="a " style="left:703px;top:183.38px;font-size:12.5px;line-height:12.5px;color:#e03030">*</div>
<div class="a flat" style="left:751px;top:178.7px;width:153.5px;height:19.5px;"></div>
<div class="a sunk" style="left:562.3px;top:197.8px;width:224px;height:23px;"><div class="dd"></div></div>
<div class="a " style="left:564px;top:201.10px;font-size:14px;line-height:14px;color:#0000a0;font-weight:bold">000021XX</div>
<div class="a " style="left:911px;top:184.11px;font-size:13.4px;line-height:13.4px;color:#383838">SN:</div>
<div class="a " style="left:955px;top:183.88px;font-size:12.5px;line-height:12.5px;color:#e03030">*</div>
<div class="a flat" style="left:796.6px;top:197.8px;width:252.6px;height:24.5px;"></div>
<div class="a" style="left:773px;width:300px;text-align:center;top:200.50px;font-size:14px;line-height:14px;color:#0000a0;font-weight:bold">ertewttew</div>
<div class="a " style="left:1079.6px;top:184.11px;font-size:13.4px;line-height:13.4px;color:#383838">A/C Type:</div>
<div class="a sunk" style="left:1053px;top:197.7px;width:124.4px;height:23px;"><div class="dd"></div></div>
<div class="a " style="left:736.7px;top:225.11px;font-size:13.4px;line-height:13.4px;color:#383838">Description:</div>
<div class="a " style="left:843px;top:224.88px;font-size:12.5px;line-height:12.5px;color:#e03030">*</div>
<div class="a flat" style="left:562.3px;top:241px;width:421.4px;height:25.3px;"></div>
<div class="a " style="left:564px;top:244.50px;font-size:14px;line-height:14px;color:#0000a0;font-weight:bold">LIFEJACKET TYPE 102 Mk. 2BA</div>
<div class="a " style="left:1038px;top:226.11px;font-size:13.4px;line-height:13.4px;color:#383838">Contract Type:</div>
<div class="a " style="left:1152px;top:225.88px;font-size:12.5px;line-height:12.5px;color:#e03030">*</div>
<div class="a sunk" style="left:990px;top:242px;width:184px;height:22.5px;"><div class="dd"></div></div>
<div class="a " style="left:992.7px;top:245.40px;font-size:14px;line-height:14px;color:#0000a0;font-weight:bold">NA</div>
<div class="a " style="left:1194.8px;top:226.51px;font-size:13.4px;line-height:13.4px;color:#383838">A/C Reg:</div>
<div class="a " style="left:1264px;top:226.28px;font-size:12.5px;line-height:12.5px;color:#e03030">*</div>
<div class="a sunk" style="left:1179px;top:242px;width:98.7px;height:22.5px;"><div class="dd"></div></div>
<div class="a " style="left:1181.6px;top:244.50px;font-size:14px;line-height:14px;color:#0000a0;font-weight:bold">LY-STG</div>
<div class="a " style="left:1295px;top:226.51px;font-size:13.4px;line-height:13.4px;color:#383838">Treatment:</div>
<div class="a " style="left:1372.5px;top:226.28px;font-size:12.5px;line-height:12.5px;color:#e03030">*</div>
<div class="a sunk" style="left:1291.5px;top:242px;width:84px;height:22.5px;"><div class="dd"></div></div>
<div class="a " style="left:1294.4px;top:244.50px;font-size:14px;line-height:14px;color:#0000a0;font-weight:bold">BTS</div>
<div class="a grp" style="left:562.4px;top:284.6px;width:322.6px;height:75px;"></div>
<div class="a " style="left:569px;top:278.07px;font-size:13.8px;line-height:13.8px;font-weight:bold;color:#101010"><span style="padding:0 2px;background:#d4d0c8">Time:</span></div>
<div class="a " style="left:583.5px;top:299.41px;font-size:13.4px;line-height:13.4px;color:#505050">TSO :</div>
<div class="a flat" style="left:632px;top:297.5px;width:86px;height:24.8px;"></div>
<div class="a" style="left:525px;width:300px;text-align:center;top:300.20px;font-size:14px;line-height:14px;color:#0000a0;font-weight:bold">NA</div>
<div class="a " style="left:738.7px;top:299.41px;font-size:13.4px;line-height:13.4px;color:#505050">TSN :</div>
<div class="a flat" style="left:786px;top:297.5px;width:86px;height:24.8px;"></div>
<div class="a" style="left:679px;width:300px;text-align:center;top:300.20px;font-size:14px;line-height:14px;color:#0000a0;font-weight:bold">NA</div>
<div class="a " style="left:583.5px;top:331.51px;font-size:13.4px;line-height:13.4px;color:#505050">CSO :</div>
<div class="a flat" style="left:632px;top:329.3px;width:86px;height:24.8px;"></div>
<div class="a" style="left:525px;width:300px;text-align:center;top:332.30px;font-size:14px;line-height:14px;color:#0000a0;font-weight:bold">NA</div>
<div class="a " style="left:738.7px;top:331.51px;font-size:13.4px;line-height:13.4px;color:#505050">CSN :</div>
<div class="a flat" style="left:786px;top:329.3px;width:86px;height:24.8px;"></div>
<div class="a" style="left:679px;width:300px;text-align:center;top:332.30px;font-size:14px;line-height:14px;color:#0000a0;font-weight:bold">NA</div>
<div class="a grp" style="left:890px;top:285px;width:486px;height:75px;"></div>
<div class="a " style="left:893.5px;top:278.27px;font-size:13.8px;line-height:13.8px;font-weight:bold;color:#101010"><span style="padding:0 2px;background:#d4d0c8">Reason for Removal:</span></div>
<div class="a " style="left:1078px;top:278.38px;font-size:12.5px;line-height:12.5px;color:#e03030"><span style="padding:0 4px;background:#d4d0c8">*</span></div>
<div class="a flat" style="left:898.6px;top:297.2px;width:450.4px;height:58.5px;"></div>
<div class="a " style="left:1349px;top:297.2px;width:14.4px;height:58.5px;background:#ece9e4"></div>
<div class="a raised" style="left:1349px;top:297.2px;width:14.4px;height:14px;"></div>
<div class="a raised" style="left:1349px;top:341.7px;width:14.4px;height:14px;"></div>
<div class="a " style="left:900.5px;top:301.00px;font-size:14px;line-height:14px;color:#0000a0;font-weight:bold">tettewtew</div>
<div class="a grp" style="left:562.4px;top:369.8px;width:686.6px;height:74.2px;"></div>
<div class="a " style="left:569px;top:363.27px;font-size:13.8px;line-height:13.8px;font-weight:bold;color:#101010"><span style="padding:0 2px;background:#d4d0c8">Requested Work:</span></div>
<div class="a " style="left:728px;top:363.38px;font-size:12.5px;line-height:12.5px;color:#e03030"><span style="padding:0 4px;background:#d4d0c8">*</span></div>
<div class="a flat" style="left:576.3px;top:382.6px;width:645.7px;height:58.4px;"></div>
<div class="a " style="left:1222px;top:382.6px;width:15px;height:58.4px;background:#ece9e4"></div>
<div class="a raised" style="left:1222px;top:382.6px;width:15px;height:14px;"></div>
<div class="a raised" style="left:1222px;top:427px;width:15px;height:14px;"></div>
<div class="a " style="left:578px;top:385.60px;font-size:14px;line-height:14px;color:#0000a0;font-weight:bold">tewtwetewt</div>
<div class="a " style="left:569.4px;top:446.27px;font-size:13.8px;line-height:13.8px;font-weight:bold;color:#101010">Note:</div>
<div class="a flat" style="left:562px;top:458.7px;width:675px;height:47px;"></div>
<div class="a " style="left:1237px;top:458.7px;width:14px;height:47px;background:#ece9e4"></div>
<div class="a raised" style="left:1237px;top:458.7px;width:14px;height:14px;"></div>
<div class="a raised" style="left:1237px;top:491.7px;width:14px;height:14px;"></div>
<svg class="a" style="left:1352.7px;top:302.2px" width="7" height="4" viewBox="0 0 7 4"><path d="M0 4 L7 4 L3.5 0 Z" fill="#909090"/></svg>
<svg class="a" style="left:1352.7px;top:346.7px" width="7" height="4" viewBox="0 0 7 4"><path d="M0 0 L7 0 L3.5 4 Z" fill="#909090"/></svg>
<svg class="a" style="left:1226.0px;top:387.6px" width="7" height="4" viewBox="0 0 7 4"><path d="M0 4 L7 4 L3.5 0 Z" fill="#909090"/></svg>
<svg class="a" style="left:1226.0px;top:432px" width="7" height="4" viewBox="0 0 7 4"><path d="M0 0 L7 0 L3.5 4 Z" fill="#909090"/></svg>
<svg class="a" style="left:1240.5px;top:463.7px" width="7" height="4" viewBox="0 0 7 4"><path d="M0 4 L7 4 L3.5 0 Z" fill="#909090"/></svg>
<svg class="a" style="left:1240.5px;top:496.7px" width="7" height="4" viewBox="0 0 7 4"><path d="M0 0 L7 0 L3.5 4 Z" fill="#909090"/></svg>
<div class="cb" style="left:1264px;top:370.0px"></div>
<div class="a " style="left:1280px;top:369.30px;font-size:12px;line-height:12px;color:#383838">Received</div>
<div class="cb" style="left:1264px;top:387.5px"></div>
<div class="a " style="left:1280px;top:386.80px;font-size:12px;line-height:12px;color:#383838">Disassembly</div>
<div class="cb" style="left:1264px;top:405.0px"></div>
<div class="a " style="left:1280px;top:404.30px;font-size:12px;line-height:12px;color:#383838">Cleaning</div>
<div class="cb" style="left:1264px;top:422.5px"></div>
<div class="a " style="left:1280px;top:421.80px;font-size:12px;line-height:12px;color:#383838">Paint Removal</div>
<div class="cb" style="left:1264px;top:440.0px"></div>
<div class="a " style="left:1280px;top:439.30px;font-size:12px;line-height:12px;color:#383838">Inspection</div>
<div class="cb" style="left:1264px;top:457.5px"></div>
<div class="a " style="left:1280px;top:456.80px;font-size:12px;line-height:12px;color:#383838">NDT</div>
<div class="cb" style="left:1264px;top:475.0px"></div>
<div class="a " style="left:1280px;top:474.30px;font-size:12px;line-height:12px;color:#383838">Repair</div>
<div class="cb" style="left:1264px;top:492.5px"></div>
<div class="a " style="left:1280px;top:491.80px;font-size:12px;line-height:12px;color:#383838">Painting</div>
<div class="cb" style="left:1264px;top:510.0px"></div>
<div class="a " style="left:1280px;top:509.30px;font-size:12px;line-height:12px;color:#383838">Assembly</div>
<div class="cb" style="left:562.5px;top:515px"></div>
<div class="a " style="left:579.4px;top:514.10px;font-size:14px;line-height:14px;font-weight:bold;color:#101010">Strip Down</div>
<div class="cb" style="left:688.4px;top:515px"></div>
<div class="a " style="left:705px;top:514.10px;font-size:14px;line-height:14px;font-weight:bold;color:#a01818">On Hold</div>
<div class="cb" style="left:562.5px;top:541px"></div>
<div class="a " style="left:580.4px;top:536.70px;font-size:18px;line-height:18px;font-weight:bold;color:#a01818">AOG</div>
<div class="cb" style="left:641.8px;top:541px"></div>
<div class="a " style="left:658.5px;top:539.10px;font-size:14px;line-height:14px;font-weight:bold;color:#801818">Urgent</div>
<div class="cb" style="left:726px;top:541px"></div>
<div class="a " style="left:742.5px;top:539.10px;font-size:14px;line-height:14px;font-weight:bold;color:#101010">Routine</div>
<div class="a " style="left:818.8px;top:514.27px;font-size:13.8px;line-height:13.8px;color:#383838">DeadLine:</div>
<div class="a " style="left:895px;top:514.38px;font-size:12.5px;line-height:12.5px;color:#e03030">*</div>
<div class="a flat" style="left:821.3px;top:529px;width:128.5px;height:24.5px;"></div>
<div class="a lav" style="left:913px;top:507.7px;width:36.8px;height:23.3px;"></div>
<svg class="a" style="left:924.5px;top:513px" width="14" height="13" viewBox="0 0 14 13"><rect x="0" y="0" width="14" height="13" fill="#201818"/><rect x="0" y="0" width="14" height="3" fill="#0010c8"/><path d="M1 5h12M1 8h12M1 11h12" stroke="#e8e0e0" stroke-width="1.4" stroke-dasharray="2 1.3"/></svg>
<div class="a" style="left:735.5px;width:300px;text-align:center;top:530.60px;font-size:14px;line-height:14px;color:#0000a0;font-weight:bold">27.08.20</div>
<div class="a " style="left:954.8px;top:513.61px;font-size:13.4px;line-height:13.4px;color:#383838">Originator:</div>
<div class="a " style="left:1037px;top:513.38px;font-size:12.5px;line-height:12.5px;color:#e03030">*</div>
<div class="a sunk" style="left:953px;top:529.8px;width:68.8px;height:21.7px;"><div class="dd"></div></div>
<div class="a " style="left:954.8px;top:532.90px;font-size:14px;line-height:14px;color:#0000a0;font-weight:bold">001</div>
<div class="a " style="left:1188px;top:513.61px;font-size:13.4px;line-height:13.4px;color:#383838">Name:</div>
<div class="a " style="left:1025.6px;top:529.8px;width:351.8px;height:23.6px;background:#e4e0e4;border:1px solid;border-color:#404040 #808080 #808080 #404040"></div>
<div class="a grp" style="left:548px;top:568px;width:393px;height:149.5px;"></div>
<div class="a " style="left:554px;top:562.00px;font-size:12px;line-height:12px;font-weight:bold;color:#101058;letter-spacing:0.45px"><span style="padding:0 2px;background:#d4d0c8">Spare Parts Required for Treatment:</span></div>
<div class="a " style="left:563.3px;top:582.4px;width:363px;height:124px;background:#838083;border:1px solid;border-color:#404040 #fff #fff #404040"></div>
<div class="a raised" style="left:563.9px;top:583.3px;width:234.2px;height:17px;"></div>
<div class="a " style="left:567.6px;top:585.50px;font-size:12px;line-height:12px;color:#202020;letter-spacing:0.1px">No Spare PN were Found !</div>
<div class="a grp" style="left:941px;top:568px;width:435px;height:149.5px;"></div>
<div class="a " style="left:947px;top:561.40px;font-size:12px;line-height:12px;font-weight:bold;color:#101058;letter-spacing:0.45px"><span style="padding:0 2px;background:#d4d0c8">CMM Manual Information:</span></div>
<div class="a " style="left:955.7px;top:582.4px;width:405.3px;height:124px;background:#838083;border:1px solid;border-color:#404040 #fff #fff #404040"></div>
<div class="a raised" style="left:956.3px;top:583.3px;width:234.4px;height:17px;"></div>
<div class="a " style="left:960px;top:585.50px;font-size:12px;line-height:12px;color:#202020;letter-spacing:0.1px">No Manuals were Found !</div>
<svg class="a" style="left:0px;top:0px" width="1403" height="751" viewBox="0 0 1403 751"><path d="M1241.7 155.6 L1128.8 251.5 L1158.6 277 Z" fill="#1496fa"/><circle cx="1135.2" cy="274.5" r="22.9" fill="#1496fa" stroke="#282828" stroke-width="1.4"/><circle cx="1135.2" cy="274.5" r="21.7" fill="none" stroke="#d8ecff" stroke-width="0.7"/><text x="1135.2" y="284.2" text-anchor="middle" font-family="Liberation Sans" font-weight="bold" font-size="22" fill="#fff" stroke="#fff" stroke-width="0.6">9</text></svg>
</body></html>
